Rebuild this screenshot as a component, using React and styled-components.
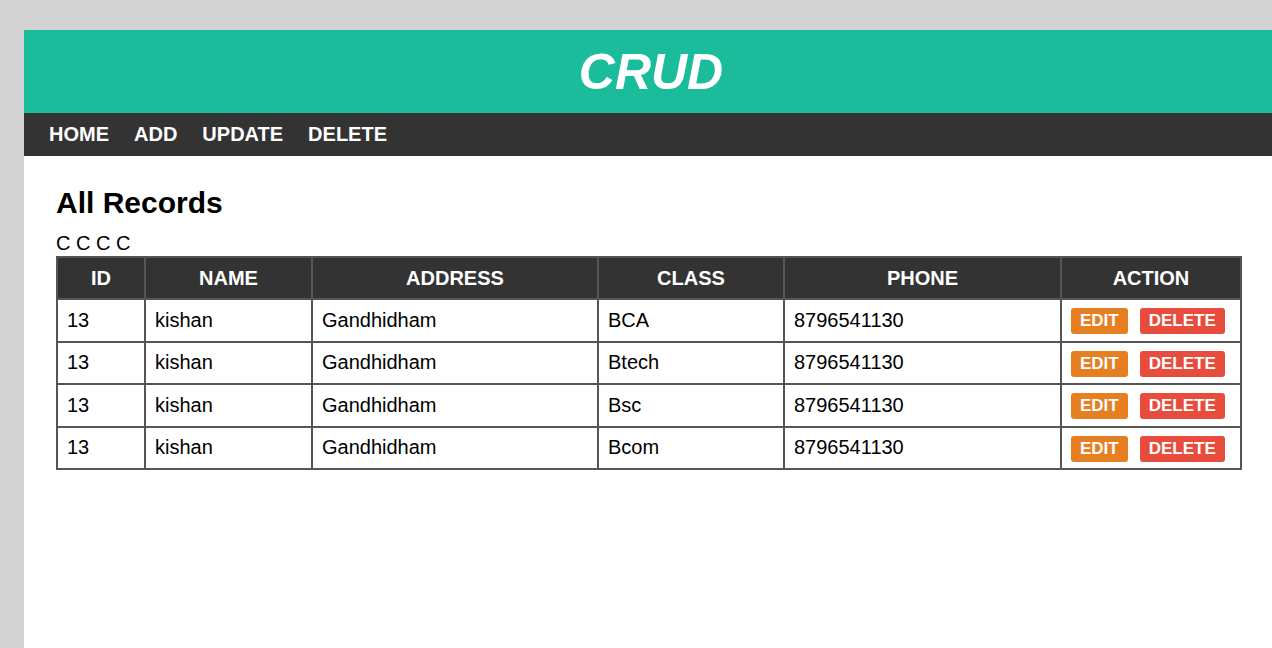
import React from 'react'
import styled, { createGlobalStyle } from 'styled-components'

const GlobalStyle = createGlobalStyle`
  html, body {
    margin: 0;
    padding: 0;
    background: #d3d3d3;
    font-family: "Liberation Sans", Arial, sans-serif;
    overflow: hidden;
  }
  body {
    padding: 30px 0 0 24px;
  }
`

const records = [
  { id: 13, name: 'kishan', address: 'Gandhidham', cls: 'BCA', phone: '8796541130' },
  { id: 13, name: 'kishan', address: 'Gandhidham', cls: 'Btech', phone: '8796541130' },
  { id: 13, name: 'kishan', address: 'Gandhidham', cls: 'Bsc', phone: '8796541130' },
  { id: 13, name: 'kishan', address: 'Gandhidham', cls: 'Bcom', phone: '8796541130' },
]

function App() {
  return (
    <>
      <GlobalStyle />
      <Page>
        <Header>CRUD</Header>
        <Nav>
          <NavLink>HOME</NavLink>
          <NavLink>ADD</NavLink>
          <NavLink>UPDATE</NavLink>
          <NavLink>DELETE</NavLink>
        </Nav>
        <Content>
          <Title>All Records</Title>
          <Letters>C C C C</Letters>
          <Table>
            <colgroup>
              <col style={{ width: 88 }} />
              <col style={{ width: 167 }} />
              <col style={{ width: 286 }} />
              <col style={{ width: 186 }} />
              <col style={{ width: 277 }} />
              <col />
            </colgroup>
            <thead>
              <tr>
                <Th>ID</Th>
                <Th>NAME</Th>
                <Th>ADDRESS</Th>
                <Th>CLASS</Th>
                <Th>PHONE</Th>
                <Th>ACTION</Th>
              </tr>
            </thead>
            <tbody>
              {records.map((r, i) => (
                <tr key={i}>
                  <Td>{r.id}</Td>
                  <Td>{r.name}</Td>
                  <Td>{r.address}</Td>
                  <Td>{r.cls}</Td>
                  <Td>{r.phone}</Td>
                  <Td>
                    <Actions>
                      <Button color="#e67e22">EDIT</Button>
                      <Button color="#e74c3c">DELETE</Button>
                    </Actions>
                  </Td>
                </tr>
              ))}
            </tbody>
          </Table>
        </Content>
      </Page>
    </>
  )
}

export default App

let Page = styled.div`
  background: #fff;
  min-height: 618px;
`
let Header = styled.h1`
  margin: 0;
  height: 83px;
  background: #1abc9c;
  color: #fff;
  font-size: 50px;
  font-style: italic;
  font-weight: 700;
  display: flex;
  align-items: center;
  justify-content: center;
  padding-left: 6px;
`
let Nav = styled.nav`
  height: 43px;
  background: #333;
  display: flex;
  align-items: center;
  gap: 25px;
  padding-left: 25px;
`
let NavLink = styled.a`
  color: #fff;
  font-size: 20px;
  font-weight: 700;
  cursor: pointer;
`
let Content = styled.div`
  padding: 30px 30px 0 32px;
`
let Title = styled.h2`
  margin: 0 0 12px;
  font-size: 30px;
  font-weight: 700;
  color: #000;
`
let Letters = styled.div`
  font-size: 20px;
  color: #000;
  line-height: 23px;
  margin-bottom: 1px;
`
let Table = styled.table`
  width: 1186px;
  border-collapse: collapse;
  table-layout: fixed;
  border: 2px solid #555;
`
let Th = styled.th`
  background: #333;
  color: #fff;
  font-size: 20px;
  font-weight: 700;
  height: 40px;
  padding: 0;
  border: 2px solid #555;
  text-align: center;
`
let Td = styled.td`
  font-size: 20px;
  color: #000;
  height: 40.5px;
  padding: 0 0 0 9px;
  border: 2px solid #555;
`
let Actions = styled.div`
  display: flex;
  gap: 12px;
  padding-top: 2px;
`
let Button = styled.button`
  background: ${p => p.color};
  color: #fff;
  border: none;
  border-radius: 3px;
  font-family: "Liberation Sans", Arial, sans-serif;
  font-size: 17px;
  font-weight: 700;
  height: 26px;
  padding: 0 9px;
  cursor: pointer;
`
